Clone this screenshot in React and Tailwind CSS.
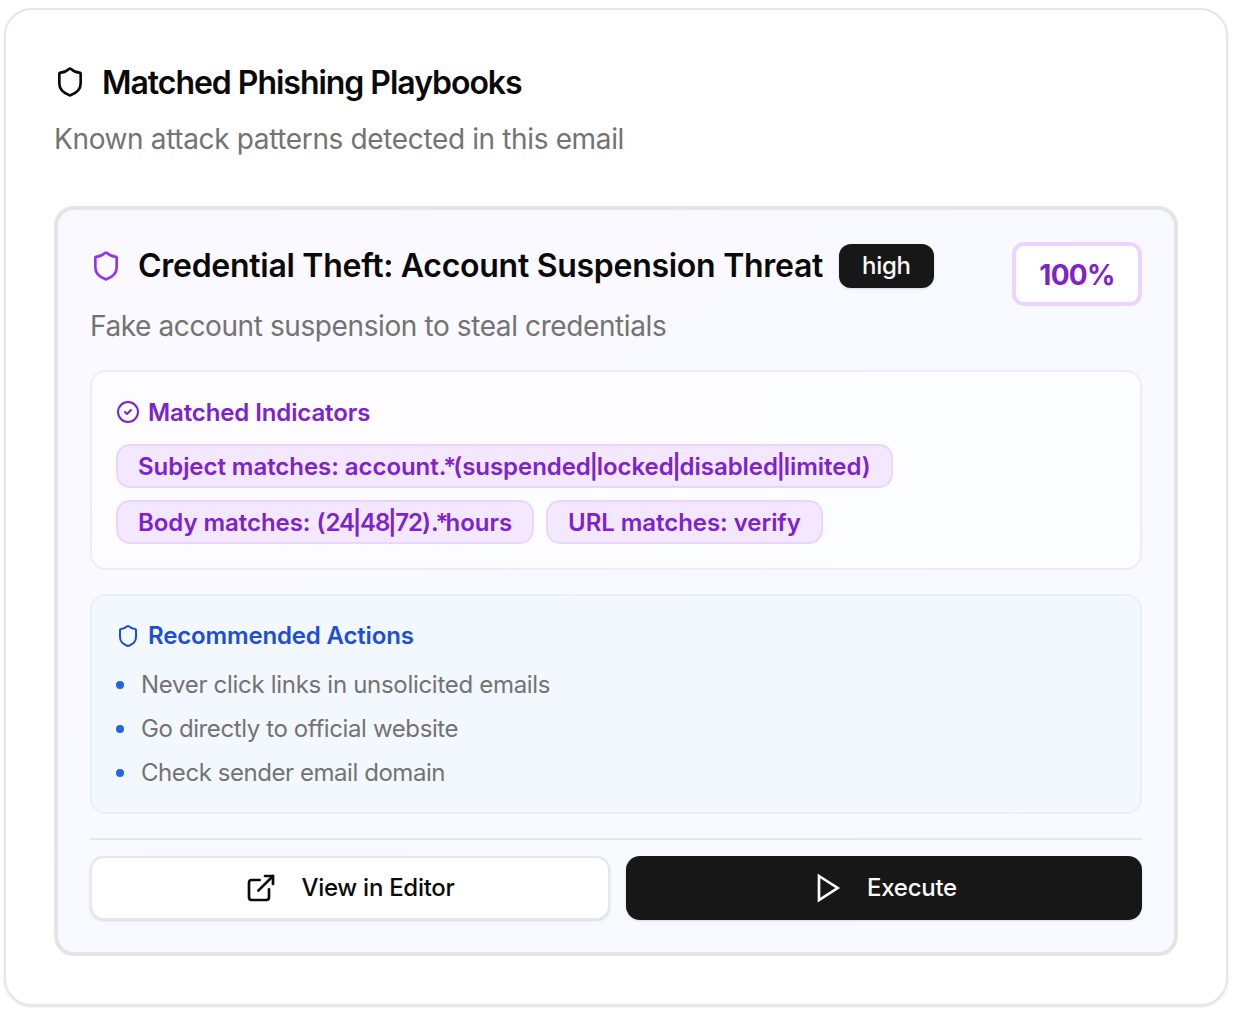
import React from "react";
import { Shield, CircleCheck, ExternalLink } from "lucide-react";

function Chip({ text }) {
  const parts = text.split(/(\.\*|\||\d+)/);
  return (
    <span className="h-[44px] px-[20px] pt-[2px] flex items-center bg-[#f3e8ff] border-2 border-[#e9d5ff] rounded-[14px] text-[24px] font-semibold tracking-[-0.05px] text-[#7e22ce]">
      <span>
        {parts.map((p, i) => {
          if (p === "|") return <span key={i} className="ml-[-1.3px] mr-[-1.3px]">{p}</span>;
          if (p === ".*") return <span key={i} className="tracking-[-3px]">{p}</span>;
          if (/^\d+$/.test(p)) return <span key={i} className="tracking-[-1px]">{p}</span>;
          return <React.Fragment key={i}>{p}</React.Fragment>;
        })}
      </span>
    </span>
  );
}

const actions = [
  { text: "Never click links in unsolicited emails", cls: "tracking-[-0.3px]" },
  { text: "Go directly to official website", cls: "tracking-[-0.39px]" },
  { text: "Check sender email domain", cls: "tracking-[-0.44px]" },
];

export default function App() {
  return (
    <div className="w-[1234px] h-[1012px] bg-white pt-[8px] pl-[4px] font-['Inter',sans-serif]">
      <div className="w-[1224px] h-[998px] bg-white border-2 border-[#e5e7eb] rounded-[28px] shadow-sm pt-[48px] px-[48px]">
        <div className="flex items-center gap-[16px] h-[48px]">
          <Shield className="w-[32px] h-[32px] text-[#0a0a0a]" strokeWidth={2} />
          <h2 className="pt-[2px] text-[32px] leading-[48px] font-semibold tracking-[-1.03px] text-[#0a0a0a]">Matched Phishing Playbooks</h2>
        </div>
        <p className="mt-[13px] text-[28px] leading-[40px] tracking-[-0.36px] text-[#737373]">Known attack patterns detected in this email</p>

        <div className="mt-[47px] w-[1124px] h-[750px] border-[4px] border-[#e5e5e5] rounded-[20px] bg-gradient-to-br from-[#faf9ff] to-[#f7faff] p-[32px]">
          <div className="flex items-start justify-between">
            <div>
              <div className="flex items-center gap-[16px] h-[48px]">
                <Shield className="w-[32px] h-[32px] text-[#9333ea]" strokeWidth={2} />
                <h3 className="text-[32px] leading-[48px] font-semibold tracking-[-0.28px] text-[#0a0a0a]">Credential Theft: Account Suspension Threat</h3>
                <span className="h-[44px] px-[23px] flex items-center rounded-[12px] bg-[#171717] text-[#fafafa] text-[24px] font-medium tracking-[-0.3px] shadow-sm">high</span>
              </div>
              <p className="mt-[16px] text-[28px] leading-[40px] tracking-[-0.4px] text-[#737373]">Fake account suspension to steal credentials</p>
            </div>
            <div className="w-[130px] h-[64px] pt-[2px] flex items-center justify-center bg-white border-[4px] border-[#ead5fe] rounded-[12px] text-[28px] font-bold tracking-[-0.75px] text-[#7e22ce]">100%</div>
          </div>

          <div className="mt-[24px] h-[200px] bg-white/70 border-2 border-[#f3e8ff] rounded-[16px] px-[24px] pt-[24px]">
            <div className="flex items-center gap-[8px] h-[32px]">
              <CircleCheck className="w-[24px] h-[24px] text-[#7e22ce]" strokeWidth={2} />
              <span className="pt-[2px] text-[24px] leading-[32px] font-semibold tracking-[-0.11px] text-[#7e22ce]">Matched Indicators</span>
            </div>
            <div className="mt-[16px] flex flex-wrap gap-[12px]">
              {["Subject matches: account.*(suspended|locked|disabled|limited)", "Body matches: (24|48|72).*hours", "URL matches: verify"].map((t) => (
                <Chip key={t} text={t} />
              ))}
            </div>
          </div>

          <div className="mt-[24px] h-[220px] bg-[#f3f7fe] border-2 border-[#e6effc] rounded-[16px] px-[24px] pt-[24px]">
            <div className="flex items-center gap-[8px] h-[32px]">
              <Shield className="w-[24px] h-[24px] text-[#1d4ed8]" strokeWidth={2} />
              <span className="text-[24px] leading-[32px] font-semibold tracking-[-0.16px] text-[#1d4ed8]">Recommended Actions</span>
            </div>
            <ul className="mt-[17px] flex flex-col gap-[12px]">
              {actions.map((a) => (
                <li key={a.text} className={`flex items-center gap-[17px] h-[32px] text-[24px] leading-[32px] text-[#737373] ${a.cls}`}>
                  <span className="w-[8px] h-[8px] rounded-full bg-[#2563eb]" />
                  {a.text}
                </li>
              ))}
            </ul>
          </div>

          <div className="mt-[24px] pt-[16px] border-t-2 border-[#e5e5e5] flex gap-[16px]">
            <button className="w-[520px] h-[64px] flex items-center justify-center gap-[24px] bg-white border-2 border-[#e5e7eb] rounded-[14px] text-[24px] font-medium tracking-[-0.28px] text-[#0a0a0a] shadow-sm">
              <ExternalLink className="w-[32px] h-[32px]" strokeWidth={2} />
              <span>View in Editor</span>
            </button>
            <button className="w-[516px] h-[64px] flex items-center justify-center gap-[24px] bg-[#171717] rounded-[14px] text-[24px] font-medium tracking-[-0.28px] text-[#fafafa] shadow-sm">
              <svg viewBox="0 0 24 24" className="w-[32px] h-[32px]" fill="none" stroke="currentColor" strokeWidth="2" strokeLinejoin="miter">
                <polygon points="6 3 20 12 6 21" />
              </svg>
              <span>Execute</span>
            </button>
          </div>
        </div>
      </div>
    </div>
  );
}
